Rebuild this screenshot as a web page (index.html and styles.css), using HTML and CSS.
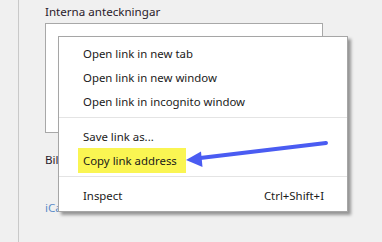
FILE: index.html
```html
<!DOCTYPE html>
<html>
<head>
 <meta charset="utf-8">
 <title>Interna anteckningar</title>
 <link rel="stylesheet" href="styles.css">
</head>
<body>
<div class="Page">
 <div class="SideBar"></div>
 <div class="Content">
  <div class="FieldLabel">Interna anteckningar</div>
  <div class="NotesBox"></div>
  <div class="FieldLabel FieldLabelBil">Bilagor</div>
  <div class="FieldLink">iCal-fil</div>
 </div>
</div>

<!-- Context menu -->
<div class="ContextMenu">
 <div class="MenuItem">Open link in new tab</div>
 <div class="MenuItem">Open link in new window</div>
 <div class="MenuItem">Open link in incognito window</div>
 <div class="MenuSeparator"></div>
 <div class="MenuItem">Save link as...</div>
 <div class="MenuItem"><span class="Marker">Copy link address</span></div>
 <div class="MenuSeparator"></div>
 <div class="MenuItem"><span>Inspect</span><span class="Shortcut">Ctrl+Shift+I</span></div>
</div>

<!-- Annotation arrow -->
<svg class="Arrow" width="382" height="242" viewBox="0 0 382 242">
 <line x1="326" y1="143" x2="196" y2="158.5" stroke="#4a5cf2" stroke-width="4" stroke-linecap="round"/>
 <polygon points="186,160 201,151.5 202.5,167" fill="#4a5cf2"/>
</svg>
</body>
</html>
```
FILE: styles.css
```css
body {
 margin:0;
 background-color:#f0f0f0;
 font-family:"Noto Sans", "Open Sans", Arial, sans-serif;
 font-size:11.4px;
 color:#1e1e1e;
}

.Page {
 display:flex;
 height:242px;
}
.SideBar {
 width:18px;
 border-right:1px solid #c9c9c9;
}
.Content {
 flex:1;
 padding:4px 0 0 26px;
}
.FieldLabel {
 font-size:11.6px;
 line-height:16px;
 color:#2a1a2a;
}
.NotesBox {
 width:276px;
 height:108px;
 margin-top:3px;
 border:1px solid #a8a8a8;
 background:#ffffff;
}
.FieldLabelBil {
 margin-top:19px;
}
.FieldLink {
 margin-top:32px;
 font-size:11.6px;
 color:#5b8cc8;
}

/* Context menu */
.ContextMenu {
 position:absolute;
 left:58px;
 top:36px;
 width:288px;
 padding:4px 0;
 border:1px solid #a6a6a6;
 background:#ffffff;
 box-shadow:3px 3px 3px rgba(0,0,0,0.38);
}
.MenuItem {
 display:flex;
 justify-content:space-between;
 align-items:center;
 height:24px;
 padding:0 23px 0 24px;
 color:#1a1a1a;
}
.MenuSeparator {
 height:1px;
 margin:4px 0 6px;
 background:#e4e4e4;
}
.Marker {
 background:#faf552;
 margin-left:-5px;
 padding:5px 9px 5px 5px;
}
.Shortcut {
 color:#1a1a1a;
}

.Arrow {
 position:absolute;
 left:0;
 top:0;
}
```
